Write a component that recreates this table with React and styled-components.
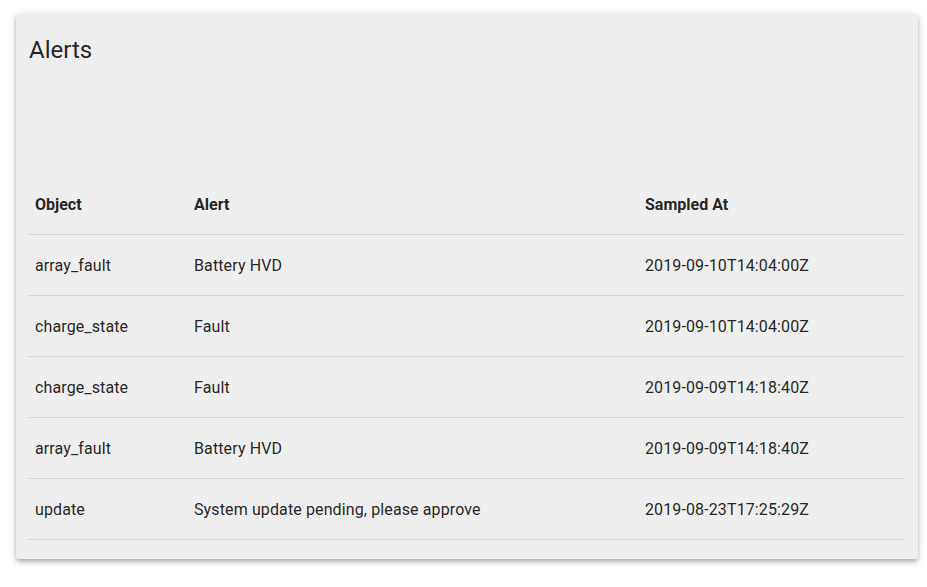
import React from "react";
import styled, { createGlobalStyle } from "styled-components";

const Global = createGlobalStyle`
  html, body { margin: 0; padding: 0; background: #ffffff; }
  body { font-family: Roboto, "Noto Sans", sans-serif; color: rgba(0,0,0,0.87); }
`;

const Page = styled.div`
  padding: 14px 9px 20px 16px;
`;

const Card = styled.section`
  background: #eeeeee;
  border-radius: 2px;
  box-shadow: 0 2px 4px -1px rgba(0,0,0,0.2), 0 4px 5px 0 rgba(0,0,0,0.14), 0 1px 10px 0 rgba(0,0,0,0.12);
  padding: 20px 13px 19px 12px;
`;

const Title = styled.h2`
  margin: 0 0 108px 1px;
  font-size: 24px;
  font-weight: 400;
  line-height: 32px;
  color: rgba(0,0,0,0.87);
`;

const Table = styled.table`
  width: 100%;
  border-collapse: collapse;
  table-layout: fixed;
  font-size: 16px;
`;

const Col = styled.col`
  width: ${(p) => p.$w}px;
`;

const HeadCell = styled.th`
  text-align: left;
  font-weight: 700;
  height: 60px;
  padding: 0 7px;
  border-bottom: 1px solid #d3d3d3;
  color: rgba(0,0,0,0.87);
  vertical-align: middle;
`;

const Cell = styled.td`
  height: 60px;
  padding: 0 7px;
  border-bottom: 1px solid #d3d3d3;
  color: rgba(0,0,0,0.87);
  letter-spacing: 0.12px;
  vertical-align: middle;
`;

const rows = [
  ["array_fault", "Battery HVD", "2019-09-10T14:04:00Z"],
  ["charge_state", "Fault", "2019-09-10T14:04:00Z"],
  ["charge_state", "Fault", "2019-09-09T14:18:40Z"],
  ["array_fault", "Battery HVD", "2019-09-09T14:18:40Z"],
  ["update", "System update pending, please approve", "2019-08-23T17:25:29Z"],
];

export default function App() {
  return (
    <>
      <Global />
      <Page>
        <Card>
          <Title>Alerts</Title>
          <Table>
            <colgroup>
              <Col $w={159} />
              <Col $w={451} />
              <Col $w={267} />
            </colgroup>
            <thead>
              <tr>
                <HeadCell>Object</HeadCell>
                <HeadCell>Alert</HeadCell>
                <HeadCell>Sampled At</HeadCell>
              </tr>
            </thead>
            <tbody>
              {rows.map((r, i) => (
                <tr key={i}>
                  <Cell>{r[0]}</Cell>
                  <Cell>{r[1]}</Cell>
                  <Cell>{r[2]}</Cell>
                </tr>
              ))}
            </tbody>
          </Table>
        </Card>
      </Page>
    </>
  );
}
